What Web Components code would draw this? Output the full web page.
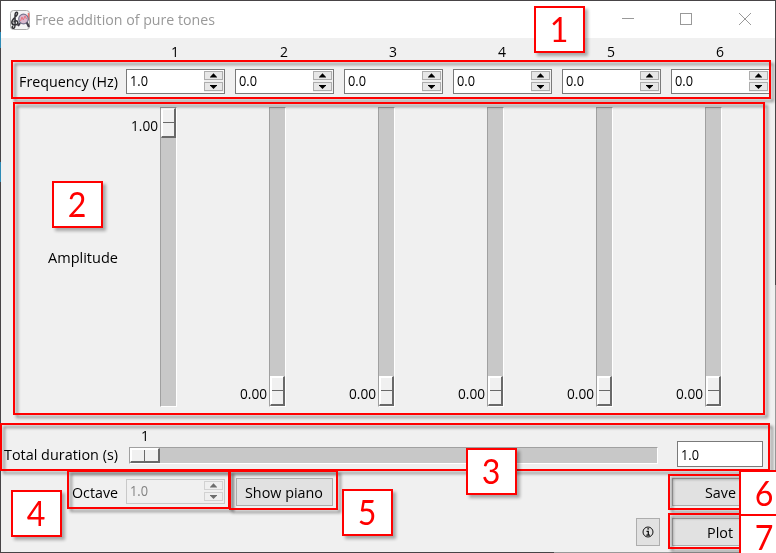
<!DOCTYPE html>
<html lang="en">
<head>
<meta charset="utf-8">
<title>Free addition of pure tones</title>
<style>
html,body{margin:0;width:776px;height:553px;overflow:hidden;background:#474446}
</style>
</head>
<body>
<tone-window></tone-window>
<script>
const make = (tag, html, init) => customElements.define(tag, class extends HTMLElement {
  connectedCallback() {
    if (this.shadowRoot) return;
    const root = this.attachShadow({mode: 'open'});
    const t = document.createElement('template');
    t.innerHTML = html;
    root.append(t.content.cloneNode(true));
    if (init) init(this, root);
  }
});

// One line of text condensed to the width given in the w attribute.
make('fit-text', `<style>
:host{display:block;height:20px;line-height:20px;white-space:nowrap;flex:none}
span{display:inline-block;transform-origin:0 50%}
</style><span><slot></slot></span>`, (el, root) => {
  const w = +el.getAttribute('w'), s = root.querySelector('span');
  el.style.width = w + 'px';
  s.style.transform = `scaleX(${w / s.getBoundingClientRect().width})`;
});

make('title-bar', `<style>
:host{display:flex;align-items:center;height:37px;background:#fff;color:#999;padding-left:9px;box-sizing:border-box}
fit-text{margin:-2px 0 0 5px}
.icon{width:20px;height:20px;flex:none}
.ctl{margin-left:auto;display:flex;gap:46px;padding-right:24px;margin-top:-1px}
.ctl svg{display:block;width:12px;height:12px;fill:none;stroke:#999}
.ctl svg:nth-child(-n+2){position:relative;left:-1px}
</style>
<svg class="icon" viewBox="0 0 20 20">
<rect x=".5" y=".5" width="19" height="19" rx="3" fill="#f5f5f5" stroke="#aaa"/>
<path d="M4.2 18C2 18.7 1.4 16.5 3.2 16.2M4.2 18C6 17 4.7 8 5.1 4.2C5.4 1.8 7.8 1.3 7.5 3.9C7.2 6.7 1.6 9 1.8 12.4C2 15.8 8 15.7 7.9 12.7C7.7 10.1 4 10.2 4 12.5" fill="none" stroke="#343438" stroke-width="1.5"/>
<path d="M18.5 3V10M16 6L19 10" stroke="#ef7770" stroke-width="1.5"/>
<circle cx="13.5" cy="9" r="4.8" fill="#d9b9ce" stroke="#77748e" stroke-width="1.2"/>
<path d="M10.5 11L12 7L13.3 10L15 6L16.5 9" fill="none" stroke="#e9737e"/>
<path d="M10 13L8 16M16.8 12.5L19 17" stroke="#45414d" stroke-width="2.2"/>
</svg>
<fit-text w="180">Free addition of pure tones</fit-text>
<div class="ctl">
<svg><path d="M0 5.5H12"/></svg>
<svg><rect x=".5" y=".5" width="11" height="11"/></svg>
<svg><path d="M0 0L12 12M12 0L0 12"/></svg>
</div>`);

make('spin-box', `<style>
:host{display:flex;box-sizing:border-box;width:99px;height:25px;border:1px solid #7a7a7a;background:#fff;color:#000;padding:1px 0 1px 3px;justify-content:space-between;--e:#adadad;--f:#e7e7e7;--a:#000}
:host([disabled]){border-color:#c9c9c9;background:#f0f0f0;color:#838383;--e:#d2d2d2;--f:#efefef;--a:#6d6d6d}
fit-text{margin-top:-1px}
.b{display:grid;grid-template-rows:10px 10px;row-gap:1px;width:20px;background:#f0f0f0;padding:0}
svg{display:block;width:19px;height:10px}
rect{fill:var(--f);stroke:var(--e)}path{fill:var(--a)}
</style><fit-text w="18"><slot></slot></fit-text>
<div class="b">
<svg><rect x=".5" y=".5" width="18" height="8"/><path d="M6 6.5V6L9.5 2.3L13 6V6.5Z"/></svg>
<svg><rect x=".5" y=".5" width="18" height="8"/><path d="M6 3.5V3H13V3.5L9.5 7Z"/></svg>
</div>`, (el, root) => {
  root.querySelector('fit-text').textContent = el.textContent;
});

// Slider trough with a raised thumb.
make('tk-scale', `<style>
:host{display:flex;box-sizing:border-box;width:17px;height:300px;background:#c8c8c8;border:1px solid;border-color:#a0a0a0 #fff #fff #a0a0a0;align-items:flex-start;flex:none}
:host([low]){align-items:flex-end}
:host([flat]){width:529px;height:17px}
i{display:block;box-sizing:border-box;width:15px;height:30px;background:linear-gradient(#696969,#696969) 1px 13px/11px 1px no-repeat #f0f0f0;border:solid;border-width:1px 2px 2px 1px;border-color:#fff #696969 #696969 #fff;box-shadow:inset 1px 1px #fff}
:host([flat]) i{width:30px;height:15px;background-position:13px 1px;background-size:1px 11px}
</style><i></i>`);

make('tk-button', `<style>
:host{display:flex;box-sizing:border-box;height:28px;border:1px solid #adadad;background:#e1e1e1;align-items:center;justify-content:center}
</style><slot></slot>`);

make('num-badge', `<style>
:host{position:absolute;display:block;box-sizing:border-box;width:51px;height:47px;border:2px solid #f00;background:#fff;color:#f00;font:35px/40px Lato,sans-serif;text-align:center;box-shadow:3px 3px 3px rgba(0,0,0,.3)}
span{display:inline-block;transform:scaleX(.92)}
</style><span><slot></slot></span>`, el => {
  const [x, y] = el.getAttribute('at').split(' ');
  el.style.left = x + 'px'; el.style.top = y + 'px';
});

make('red-frame', `<style>
:host{position:absolute;display:block;box-sizing:border-box;border:2px solid #f00;filter:drop-shadow(3px 3px 1.5px rgba(0,0,0,.42))}
</style>`, el => {
  const [x, y, w, h] = el.getAttribute('at').split(' ');
  Object.assign(el.style, {left: x + 'px', top: y + 'px', width: w + 'px', height: h + 'px'});
});

make('tone-window', `<style>
:host{display:block;position:relative;box-sizing:border-box;width:776px;height:553px;overflow:hidden;padding:1px;color:#000;font:15px "Open Sans","Noto Sans",sans-serif;background:linear-gradient(#2d8ab5,#2d8ab5) 0 32px/1px 16px no-repeat,linear-gradient(#2d8ab5,#2d8ab5) 0 162px/1px 20px no-repeat,linear-gradient(#999,#999) 554px 552px/222px 1px no-repeat,linear-gradient(#999,#999) 775px 285px/1px 268px no-repeat,#474446}
.win{background:#f0f0f0;height:551px}
.g{display:grid;grid-template-columns:115px repeat(6,99px);column-gap:10px;margin-right:-10px}
.lab{justify-self:end;margin-right:-2px}
.nums{height:31px;padding-top:3px;box-sizing:border-box}
.nums fit-text{justify-self:center;margin-right:1px}
.freq{height:25px}
.freq .lab{margin-top:2px}
.amp{margin-top:13px;height:300px}
.amp>.lab{align-self:center}
.ch{display:flex;gap:2px;padding-left:5px;align-items:flex-start}
.ch fit-text{margin-top:8px}
.ch.z fit-text{margin-top:276px}
.durblock{height:60px;padding-top:18px;box-sizing:border-box}
.tick{height:16px;padding-left:140px}
.dur{display:flex;padding-left:3px;height:26px;align-items:flex-start}
.dur .lab{margin:3px 11px 0 0}
.dur tk-scale{margin-top:6px}
.entry{box-sizing:border-box;width:86px;height:26px;border:1px solid #7a7a7a;background:#fff;margin-left:19px;padding:2px 3px}
.foot{display:flex;margin-top:11px;height:28px;padding-left:71px;align-items:flex-start}
.foot spin-box{margin:1px 11px 0 8px}
.foot .lab{margin:4px 0 0}
.foot tk-button fit-text{margin-left:-1px}
.last tk-button fit-text{margin-left:-2px}
.last{display:flex;margin-top:12px;padding-left:635px;gap:12px}
.info{width:24px;flex:none}
.wide{width:97px;flex:none}
.save{margin-left:339px}
svg{display:block}
</style>
<div class="win">
<title-bar></title-bar>
<div class="g nums"><span></span></div>
<div class="g freq"><fit-text class="lab" w="99">Frequency (Hz)</fit-text></div>
<div class="g amp"><fit-text class="lab" w="70">Amplitude</fit-text></div>
<div class="durblock">
<div class="tick"><fit-text w="8">1</fit-text></div>
<div class="dur"><fit-text class="lab" w="114">Total duration (s)</fit-text><tk-scale flat></tk-scale><div class="entry"><fit-text w="18">1.0</fit-text></div></div>
</div>
<div class="foot"><fit-text class="lab" w="46">Octave</fit-text><spin-box disabled>1.0</spin-box><tk-button class="wide"><fit-text w="78">Show piano</fit-text></tk-button><tk-button class="wide save"><fit-text w="31">Save</fit-text></tk-button></div>
<div class="last"><tk-button class="info"><svg width="12" height="12" fill="none" stroke="#111"><circle cx="6" cy="6" r="5"/><path d="M5.3 2.9H7.1M4.5 5.3H6.3V9M4.3 9.1H8" stroke-width="1.3"/></svg></tk-button><tk-button class="wide"><fit-text w="26">Plot</fit-text></tk-button></div>
</div>
<red-frame at="11 60 760 39"></red-frame>
<red-frame at="13 102 752 313"></red-frame>
<red-frame at="0 423 770 48"></red-frame>
<red-frame at="67 470 163 39"></red-frame>
<red-frame at="229 470 109 40"></red-frame>
<red-frame at="668 474 102 36"></red-frame>
<red-frame at="668 513 102 36"></red-frame>
<num-badge at="534 6">1</num-badge>
<num-badge at="52 181">2</num-badge>
<num-badge at="466 448">3</num-badge>
<num-badge at="11 490">4</num-badge>
<num-badge at="342 489">5</num-badge>
<num-badge at="739 470">6</num-badge>
<num-badge at="739 514">7</num-badge>`, (el, root) => {
  const add = (sel, html) => root.querySelector(sel).insertAdjacentHTML('beforeend', html);
  for (let n = 1; n <= 6; n++) {
    const first = n === 1;
    add('.nums', `<fit-text w="8">${n}</fit-text>`);
    add('.freq', `<spin-box>${first ? '1.0' : '0.0'}</spin-box>`);
    add('.amp', `<div class="ch${first ? '' : ' z'}"><fit-text w="27">${first ? '1.00' : '0.00'}</fit-text><tk-scale${first ? '' : ' low'}></tk-scale></div>`);
  }
});
</script>
</body>
</html>
